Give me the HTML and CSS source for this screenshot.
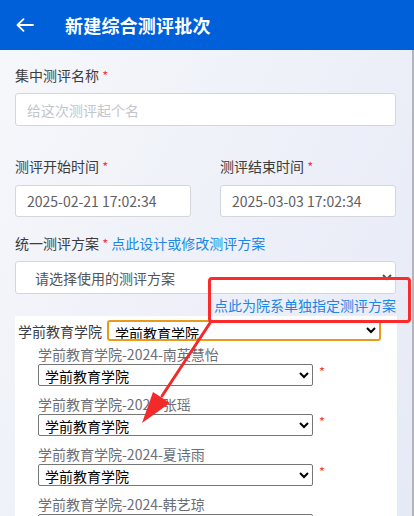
FILE: index.html
```html
<!DOCTYPE html>
<html lang="zh-CN">
<head>
    <meta charset="UTF-8">
    <meta name="viewport" content="width=device-width, initial-scale=1.0">
    <title>新建综合测评批次</title>
    <link rel="stylesheet" href="styles.css">
</head>
<body>

<header class="topbar">
    <span class="back">
        <svg width="18" height="14" viewBox="0 0 18 14"><path d="M17 7H1.5M7.5 1.2L1.5 7l6 5.8" fill="none" stroke="#fff" stroke-width="1.8" stroke-linecap="round" stroke-linejoin="round"/></svg>
    </span>
    <h1 class="title">新建综合测评批次</h1>
</header>

<main class="page">
    <div class="field">
        <label class="label">集中测评名称 <i class="req">*</i></label>
        <input class="input" type="text" placeholder="给这次测评起个名">
    </div>

    <div class="row">
        <div class="field">
            <label class="label">测评开始时间 <i class="req">*</i></label>
            <input class="input" type="text" value="2025-02-21 17:02:34">
        </div>
        <div class="field">
            <label class="label">测评结束时间 <i class="req">*</i></label>
            <input class="input" type="text" value="2025-03-03 17:02:34">
        </div>
    </div>

    <div class="field plan">
        <label class="label">统一测评方案 <i class="req">*</i> <a class="link" href="#">点此设计或修改测评方案</a></label>
        <select class="select">
            <option>请选择使用的测评方案</option>
        </select>
    </div>

    <div class="link-line"><a class="link" href="#">点此为院系单独指定测评方案</a></div>

    <!-- 院系单独指定 -->
    <section class="panel">
        <div class="college">
            <span class="college-name">学前教育学院</span>
            <select class="college-select"><option>学前教育学院</option></select>
        </div>

        <div class="item">
            <div class="item-name">学前教育学院-2024-南英慧怡</div>
            <div class="item-row"><select class="item-select"><option>学前教育学院</option></select><i class="req">*</i></div>
        </div>
        <div class="item">
            <div class="item-name">学前教育学院-2024-张瑶</div>
            <div class="item-row"><select class="item-select"><option>学前教育学院</option></select><i class="req">*</i></div>
        </div>
        <div class="item">
            <div class="item-name">学前教育学院-2024-夏诗雨</div>
            <div class="item-row"><select class="item-select"><option>学前教育学院</option></select><i class="req">*</i></div>
        </div>
        <div class="item">
            <div class="item-name">学前教育学院-2024-韩艺琼</div>
            <div class="item-row"><select class="item-select"><option>学前教育学院</option></select><i class="req">*</i></div>
        </div>
    </section>

    <!-- 标注 -->
    <div class="mark-box"></div>
    <svg class="mark-arrow" width="100" height="110" viewBox="0 0 100 110">
        <path d="M78 3L30 76" stroke="#f22a2a" stroke-width="3" stroke-linecap="round" fill="none"/>
        <path d="M10 103L21 72L38 83Z" fill="#f22a2a"/>
    </svg>
</main>

</body>
</html>
```

FILE: styles.css
```css
* {
    box-sizing: border-box;
}
html, body {
    margin: 0;
    height: 100%;
    overflow: hidden;
}
body {
    font-family: "Noto Sans CJK SC", "Noto Sans", sans-serif;
    font-size: 14px;
    color: #3c3c3c;
    background: linear-gradient(120deg, #f7f8fb 0%, #eceff8 60%, #e6eaf6 100%);
}

.topbar {
    height: 50px;
    background-color: #0060d9;
    display: flex;
    align-items: center;
    color: #fff;
}
.back {
    width: 65px;
    padding-left: 16px;
    display: flex;
    align-items: center;
}
.title {
    margin: 0;
    font-size: 18px;
    font-weight: bold;
    letter-spacing: 0.2px;
}

.page {
    position: relative;
    height: calc(100% - 50px);
    padding: 15px 16px 0 15px;
    border-right: 2px solid #b3b4bd;
}

.field {
    display: flex;
    flex-direction: column;
}
.label {
    line-height: 20px;
    margin-bottom: 7px;
    color: #3c3c3c;
}
.req {
    font-style: normal;
    color: #f53c3c;
    font-size: 13px;
}
.input {
    height: 33px;
    border: 1px solid #d4d6dd;
    border-radius: 3px;
    background: #fff;
    padding: 0 11px;
    font-family: inherit;
    font-size: 14px;
    color: #5f6064;
    outline: none;
}
.input::placeholder {
    color: #c3c5cc;
}

.row {
    display: grid;
    grid-template-columns: 176px 176px;
    justify-content: space-between;
    margin-top: 30px;
}
.row .label {
    margin-bottom: 8px;
}
.row .input {
    height: 32px;
}

.plan {
    margin-top: 16px;
}
.link {
    color: #1c86e6;
    text-decoration: none;
}
.select {
    height: 33px;
    border: 1px solid #d4d6dd;
    border-radius: 3px;
    background: #fff;
    padding: 0 6px 0 15px;
    font-family: inherit;
    font-size: 14px;
    color: #555;
    outline: none;
}

.link-line {
    margin-top: 2px;
    line-height: 18px;
    text-align: right;
}

.panel {
    margin-top: 2px;
    margin-right: -1px;
    background: #fff;
    padding: 4px 0 0 3px;
    height: 300px;
}
.college {
    display: flex;
    align-items: center;
    gap: 5px;
}
.college-name {
    color: #3a3d45;
}
.college-select {
    width: 274px;
    height: 21px;
    border: 2px solid #e79a1c;
    border-radius: 3px;
    font-family: inherit;
    font-size: 14px;
    color: #000;
    padding: 0 2px;
    background: #fff;
}

.item {
    padding-left: 20px;
    margin-bottom: 8px;
}
.college + .item {
    margin-top: 3px;
}
.item-name {
    line-height: 20px;
    color: #6b6e76;
}
.item-row {
    display: flex;
    align-items: flex-start;
    gap: 6px;
}
.item-select {
    width: 275px;
    height: 22px;
    border: 1px solid #767676;
    border-radius: 2px;
    font-family: inherit;
    font-size: 14px;
    color: #000;
    background: #fff;
    padding: 0 2px;
}
.item-row .req {
    line-height: 16px;
}

.mark-box {
    position: absolute;
    left: 208px;
    top: 227px;
    width: 203px;
    height: 46px;
    border: 3px solid #fb2b2b;
    border-radius: 4px;
}
.mark-arrow {
    position: absolute;
    left: 132px;
    top: 270px;
}
```
